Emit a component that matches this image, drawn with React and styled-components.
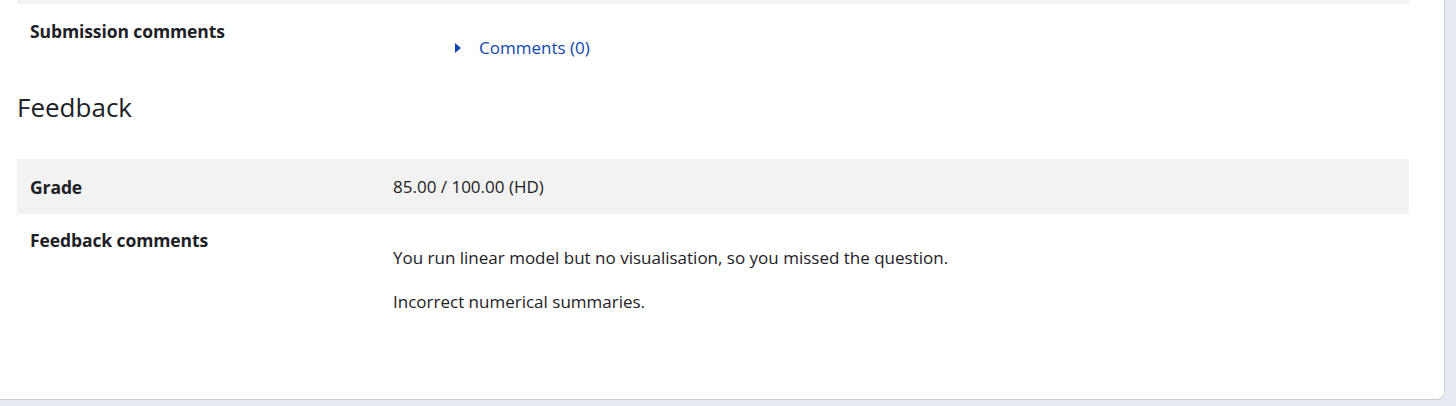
import React from "react";
import styled, { createGlobalStyle } from "styled-components";

const Global = createGlobalStyle`
  html, body { margin: 0; padding: 0; }
  body {
    background: #e6eaf2;
    font-family: "Open Sans", "Noto Sans", sans-serif;
    color: #1d2125;
    width: 1456px;
    height: 406px;
    overflow: hidden;
  }
`;

const Card = styled.div`
  background: #fff;
  width: 1446px;
  margin-left: -1px;
  height: 400px;
  box-sizing: border-box;
  border-right: 1px solid #cfd2d6;
  border-bottom: 1px solid #c8cbcf;
  border-radius: 0 0 8px 0;
  padding-left: 18px;
`;

const Table = styled.div`
  width: 1392px;
`;

const Row = styled.div`
  display: grid;
  grid-template-columns: 363px 1fr;
  background: ${(p) => (p.$shaded ? "#f2f2f2" : "transparent")};
  min-height: ${(p) => p.$h || 0}px;
`;

const TopStrip = styled.div`
  height: 4px;
  width: 1392px;
  background: #f2f2f2;
`;

const Label = styled.div`
  font-weight: 700;
  font-size: 17.5px;
  letter-spacing: -0.1px;
  padding: ${(p) => p.$pt}px 13px 0 13px;
  line-height: 24px;
`;

const Value = styled.div`
  font-size: 17px;
  line-height: 24px;
  padding: ${(p) => p.$pt}px 13px 0 13px;
`;

const CommentToggle = styled.a`
  display: flex;
  align-items: center;
  gap: 18px;
  margin-left: 62px;
  color: #0f47ad;
  text-decoration: none;
  font-size: 17px;
  cursor: pointer;
`;

const Heading = styled.h3`
  margin: 0;
  font-weight: 400;
  font-size: 26px;
  line-height: 34px;
  padding: 30px 0 35px 0;
`;

const Para = styled.p`
  margin: 0 0 20px 0;
`;

export default function App() {
  return (
    <>
      <Global />
      <Card>
        <Table>
          <TopStrip />
          <Row $h={52}>
            <Label $pt={15}>Submission comments</Label>
            <Value $pt={32}>
              <CommentToggle>
                <svg width="6" height="10" viewBox="0 0 6 10">
                  <path d="M0 0 L6 5 L0 10 Z" fill="#0f47ad" />
                </svg>
                Comments (0)
              </CommentToggle>
            </Value>
          </Row>
          <Heading>Feedback</Heading>
          <Row $shaded $h={55}>
            <Label $pt={16}>Grade</Label>
            <Value $pt={16}>85.00 / 100.00 (HD)</Value>
          </Row>
          <Row>
            <Label $pt={14}>Feedback comments</Label>
            <Value $pt={32}>
              <Para>You run linear model but no visualisation, so you missed the question.</Para>
              <Para>Incorrect numerical summaries.</Para>
            </Value>
          </Row>
        </Table>
      </Card>
    </>
  );
}
